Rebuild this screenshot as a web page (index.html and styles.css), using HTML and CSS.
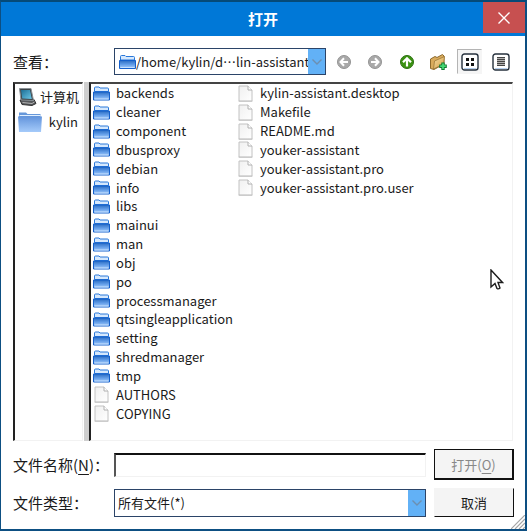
FILE: index.html
```html
<!DOCTYPE html>
<html lang="zh-CN">
<head>
<meta charset="utf-8">
<title>打开</title>
<link rel="stylesheet" href="styles.css">
</head>
<body>
<svg class="defs" width="0" height="0" aria-hidden="true">
  <defs>
    <linearGradient id="g-front" x1="0" y1="0" x2="0" y2="1"><stop offset="0" stop-color="#2a6cc2"/><stop offset=".5" stop-color="#629de8"/><stop offset="1" stop-color="#a9cffb"/></linearGradient>
    <linearGradient id="g-place" x1="0" y1="0" x2="0" y2="1"><stop offset="0" stop-color="#6394dc"/><stop offset="1" stop-color="#a5cbfa"/></linearGradient>
    <linearGradient id="g-page" x1="0" y1="0" x2="1" y2="1"><stop offset="0" stop-color="#f0f0f0"/><stop offset="1" stop-color="#ffffff"/></linearGradient>
    <linearGradient id="g-screen" x1="0" y1="0" x2="1" y2="1"><stop offset="0" stop-color="#1c6f96"/><stop offset="1" stop-color="#6cc6e6"/></linearGradient>
    <linearGradient id="g-tan" x1="0" y1="0" x2="1" y2="1"><stop offset="0" stop-color="#f6dda2"/><stop offset="1" stop-color="#d39d45"/></linearGradient>
    <symbol id="folder" viewBox="0 0 17 16">
      <path d="M1.500 6V2.500Q1.500 1.500 2.500 1.500H6L7 2.500H14.500Q15.500 2.500 15.500 3.500V6Z" fill="#d5e8fd" stroke="#2a78da"/>
      <path d="M.5 6.500H16.500V14.500H.5Z" fill="url(#g-front)" stroke="#1560cc"/>
      <path d="M1.500 13.500H15.500" stroke="#c7e1ff"/>
    </symbol>
    <symbol id="page" viewBox="0 0 16 17">
      <path d="M1.500 1H10.500L14.500 5V16H1.500Z" fill="url(#g-page)" stroke="#c2c2c2"/>
      <path d="M10.500 1V5H14.500" fill="#fff" stroke="#b0b0b0"/>
      <path d="M1 16.300H15" stroke="#b5b5b5" stroke-width=".6"/>
    </symbol>
  </defs>
</svg>

<main class="dialog">
  <header class="titlebar">
    <h1>打开</h1>
    <button class="close" type="button" aria-label="关闭"><svg width="14" height="14" viewBox="0 0 14 14"><path d="M1.500 1.500 12.500 12.500M12.500 1.500 1.500 12.500" stroke="#fff" stroke-width="1.400"/></svg></button>
  </header>

  <form class="content">
    <div class="lookbar">
      <label class="label" for="look">查看：</label>
      <div class="combo path">
        <svg class="combo-icon" width="17" height="16"><use href="#folder"/></svg>
        <select id="look"><option>/home/kylin/d…lin-assistant</option></select>
        <span class="arrow"><svg width="10" height="6" viewBox="0 0 10 6"><path d="M.5 .5 5 5 9.500 .5" fill="none" stroke="#6d8fb0" stroke-width="1.400"/></svg></span>
      </div>
      <div class="tools">
        <button type="button" aria-label="后退" disabled><svg width="16" height="16" viewBox="0 0 16 16"><circle cx="8" cy="8" r="6.500" fill="#a9a9a9" stroke="#949494"/><path d="M12 8H5M8 4.300 4.500 8 8 11.700" fill="none" stroke="#fff" stroke-width="2"/></svg></button>
        <button type="button" aria-label="前进" disabled><svg width="16" height="16" viewBox="0 0 16 16"><circle cx="8" cy="8" r="6.500" fill="#a9a9a9" stroke="#949494"/><path d="M4 8H11M8 4.300 11.500 8 8 11.700" fill="none" stroke="#fff" stroke-width="2"/></svg></button>
        <button type="button" aria-label="上级目录"><svg width="16" height="16" viewBox="0 0 16 16"><circle cx="8" cy="8" r="6.500" fill="#3b9212" stroke="#2b6f10"/><path d="M8 12.500V5M4 8.300 8 4.300 12 8.300" fill="none" stroke="#fff" stroke-width="2.200"/></svg></button>
        <button type="button" aria-label="新建文件夹"><svg width="18" height="18" viewBox="0 0 18 18"><path d="M1.500 15.500V6L6 3.500 8 4.500 13.500 1.500 15 3V11L5 16.500Z" fill="#d9ab5c" stroke="#8d6a2e"/><path d="M4.500 16 5.500 8 15.500 3.500 14.500 11Z" fill="url(#g-tan)" stroke="#9c7737" stroke-width=".8"/><path d="M14 9.500V17M10.200 13.200H17.800" stroke="#117a32" stroke-width="3.400"/><path d="M14 10.500V16M11.200 13.200H16.800" stroke="#45d873" stroke-width="1.800"/></svg></button>
        <button class="pressed" type="button" aria-label="列表视图" aria-pressed="true"><svg width="18" height="18" viewBox="0 0 18 18"><rect x="1" y="1" width="16" height="16" rx="2.500" fill="#fff" stroke="#26313d" stroke-width="1.400"/><path d="M3 15.500H15" stroke="#b5cfee"/><path d="M5 5H8V8H5ZM10 5H13V8H10ZM5 10H8V13H5ZM10 10H13V13H10Z" fill="#111"/></svg></button>
        <button type="button" aria-label="详细视图"><svg width="18" height="18" viewBox="0 0 18 18"><rect x="1" y="1" width="16" height="16" rx="2.500" fill="#fff" stroke="#26313d" stroke-width="1.400"/><path d="M3 15.500H15" stroke="#b5cfee"/><path d="M5 4.500H13V12.500H5Z" fill="#b0b0b0"/><path d="M5 4.500H13M5 6.500H13M5 8.500H13M5 10.500H13M5 12.500H13" stroke="#444"/></svg></button>
      </div>
    </div>

    <div class="panes">
      <ul class="places">
        <li><svg width="20" height="20" viewBox="0 0 20 20"><path d="M2 13 4 17.500 14 18.500 18 16.500 16 12.500Z" fill="#55585b" stroke="#333"/><path d="M1.500 1.500H13L15.500 13.500 3 13Z" fill="#3c4347" stroke="#8b9297"/><path d="M3 3H12L13.800 12 4.200 11.600Z" fill="url(#g-screen)"/><path d="M4.500 15.500 14 16.500 16.500 15" fill="none" stroke="#b5b5b5"/></svg><span>计算机</span></li>
        <li><svg width="24" height="22" viewBox="0 0 24 22"><path d="M1 5V1.500H8L9.500 3H22.500V6H1Z" fill="#6798da"/><path d="M1.500 4.500H22.500" stroke="#e0efff"/><path d="M0 5.500H24L23 21H1Z" fill="url(#g-place)"/></svg><span class="latin">kylin</span></li>
      </ul>
      <div class="splitter"></div>
      <ul class="files">
        <li><svg><use href="#folder"/></svg>backends</li>
        <li><svg><use href="#folder"/></svg>cleaner</li>
        <li><svg><use href="#folder"/></svg>component</li>
        <li><svg><use href="#folder"/></svg>dbusproxy</li>
        <li><svg><use href="#folder"/></svg>debian</li>
        <li><svg><use href="#folder"/></svg>info</li>
        <li><svg><use href="#folder"/></svg>libs</li>
        <li><svg><use href="#folder"/></svg>mainui</li>
        <li><svg><use href="#folder"/></svg>man</li>
        <li><svg><use href="#folder"/></svg>obj</li>
        <li><svg><use href="#folder"/></svg>po</li>
        <li><svg><use href="#folder"/></svg>processmanager</li>
        <li><svg><use href="#folder"/></svg>qtsingleapplication</li>
        <li><svg><use href="#folder"/></svg>setting</li>
        <li><svg><use href="#folder"/></svg>shredmanager</li>
        <li><svg><use href="#folder"/></svg>tmp</li>
        <li><svg><use href="#page"/></svg>AUTHORS</li>
        <li><svg><use href="#page"/></svg>COPYING</li>
        <li><svg><use href="#page"/></svg>kylin-assistant.desktop</li>
        <li><svg><use href="#page"/></svg>Makefile</li>
        <li><svg><use href="#page"/></svg>README.md</li>
        <li><svg><use href="#page"/></svg>youker-assistant</li>
        <li><svg><use href="#page"/></svg>youker-assistant.pro</li>
        <li><svg><use href="#page"/></svg>youker-assistant.pro.user</li>
      </ul>
    </div>

    <div class="fields">
      <label class="label" for="name">文件名称(<u>N</u>)：</label>
      <input class="name" id="name" type="text">
      <button class="action default" type="submit" disabled>打开(<u>O</u>)</button>
      <label class="label" for="type">文件类型：</label>
      <div class="combo">
        <select id="type"><option>所有文件(*)</option></select>
        <span class="arrow"><svg width="10" height="6" viewBox="0 0 10 6"><path d="M.5 .5 5 5 9.500 .5" fill="none" stroke="#6d8fb0" stroke-width="1.400"/></svg></span>
      </div>
      <button class="action" type="button">取消</button>
    </div>
  </form>

  <svg class="grip" width="14" height="14" viewBox="0 0 14 14" aria-hidden="true"><path d="M0 14 14 0M4 14 14 4M8 14 14 8M12 14 14 12" stroke="#a5a5a5" stroke-width="1.200"/></svg>
  <svg class="pointer" width="14" height="22" viewBox="0 0 14 22" aria-hidden="true"><path d="M1 1V18L5 14.500 7 19.500Q8.500 20.500 10 19L8 13.500H12.500Z" fill="#fff" stroke="#1c1c1c" stroke-width="1.400"/></svg>
</main>
</body>
</html>
```
FILE: styles.css
```css
* {
  box-sizing: border-box;
}

body {
  margin: 0;
  font-family: "Noto Sans CJK SC", sans-serif;
  font-size: 13px;
  color: #1a1a1a;
}

button,
input,
select {
  font: inherit;
  color: inherit;
  margin: 0;
  border-radius: 0;
}

ul {
  list-style: none;
  margin: 0;
  padding: 0;
}

u {
  text-underline-offset: 3px;
}

.defs {
  position: absolute;
}

.dialog {
  position: relative;
  display: flex;
  flex-direction: column;
  min-height: 100vh;
  background: #fff;
  border: 2px solid #0d4f82;
  border-left-width: 1px;
  border-top-color: #054a78;
}

.titlebar {
  display: grid;
  grid-template-columns: 42px 1fr 42px;
  height: 34px;
  background: #0078d7;
  color: #fff;
}

.titlebar h1 {
  grid-column: 2;
  margin: 0;
  font-size: 15px;
  line-height: 34px;
  font-weight: 700;
  text-align: center;
}

.close {
  display: grid;
  place-items: center;
  height: 31px;
  padding: 0;
  border: 0;
  background: #c75050;
}

.content {
  flex: 1;
  display: flex;
  flex-direction: column;
  padding: 12px 11px 12px 12px;
}

.label {
  width: 101px;
  flex: none;
  font-size: 15px;
  line-height: 24px;
  white-space: nowrap;
}

.lookbar {
  display: flex;
  align-items: center;
  height: 27px;
}

.combo {
  position: relative;
  display: flex;
  height: 28px;
  border: 1px solid #2b4468;
  background: #fff;
}

.combo select {
  flex: 1;
  min-width: 0;
  appearance: none;
  border: 0;
  padding: 0 3px;
  background: transparent;
  outline: 0;
}

.path {
  flex: 0 1 212px;
  min-width: 0;
  height: 27px;
}

.path select {
  padding: 0;
  text-overflow: clip;
}

.combo-icon {
  flex: none;
  align-self: center;
  margin-left: 4px;
}

.arrow {
  display: grid;
  place-items: center;
  width: 17px;
  flex: none;
  background: #62b1f6;
  pointer-events: none;
}

.tools {
  display: flex;
  align-items: center;
  flex: 1;
  justify-content: space-between;
  padding-left: 5px;
}

.tools button {
  display: grid;
  place-items: center;
  width: 25px;
  height: 25px;
  padding: 0;
  border: 1px solid transparent;
  background: none;
}

.tools .pressed {
  background: #f5f5f5;
  border-top-color: #b4b4b4;
  border-left-color: #b4b4b4;
}

.panes {
  flex: 1;
  display: flex;
  margin: 7px 1px 0 0;
}

.places {
  width: 70px;
  border: 1px solid #f2f2f2;
  border-top: 2px solid #444;
  border-left: 2px solid #222;
}

.places li {
  display: flex;
  align-items: center;
  justify-content: space-between;
  height: 25px;
  padding: 0 3px;
  white-space: nowrap;
}

.places .latin {
  padding-right: 1px;
}

.splitter {
  width: 5px;
  margin-left: 1px;
  background: #cfcfcf;
}

.files {
  flex: 1;
  display: grid;
  grid-auto-flow: column;
  grid-template-rows: repeat(18, 1fr);
  grid-template-columns: 144px 1fr;
  padding: 0 0 17px 2px;
  border: 1px solid #f2f2f2;
  border-top: 2px solid #444;
  border-left: 2px solid #222;
}

.files li {
  display: flex;
  align-items: center;
  gap: 6px;
  line-height: 18px;
  white-space: nowrap;
}

.files svg {
  width: 17px;
  height: 17px;
  flex: none;
}

.fields {
  display: grid;
  grid-template-columns: 101px 1fr 80px;
  row-gap: 8px;
  align-items: center;
  margin-top: 8px;
}

.name {
  height: 24px;
  padding: 0 4px;
  border: 1px solid #f2f2f2;
  border-top: 2px solid #111;
  border-left: 2px solid #555;
  background: #fff;
}

.name,
.fields .combo {
  margin-right: 8px;
}

.action {
  height: 29px;
  padding: 0;
  background: #f4f4f4;
  border: 1px solid #f4f4f4;
  border-right-color: #111;
  border-bottom-color: #111;
}

.default {
  height: 31px;
  color: #888;
  border: 1px solid #111;
  border-right-width: 2px;
  border-bottom-width: 2px;
}

.grip {
  position: absolute;
  right: 0;
  bottom: 0;
}

.pointer {
  position: absolute;
  left: 489px;
  top: 267px;
}
```
